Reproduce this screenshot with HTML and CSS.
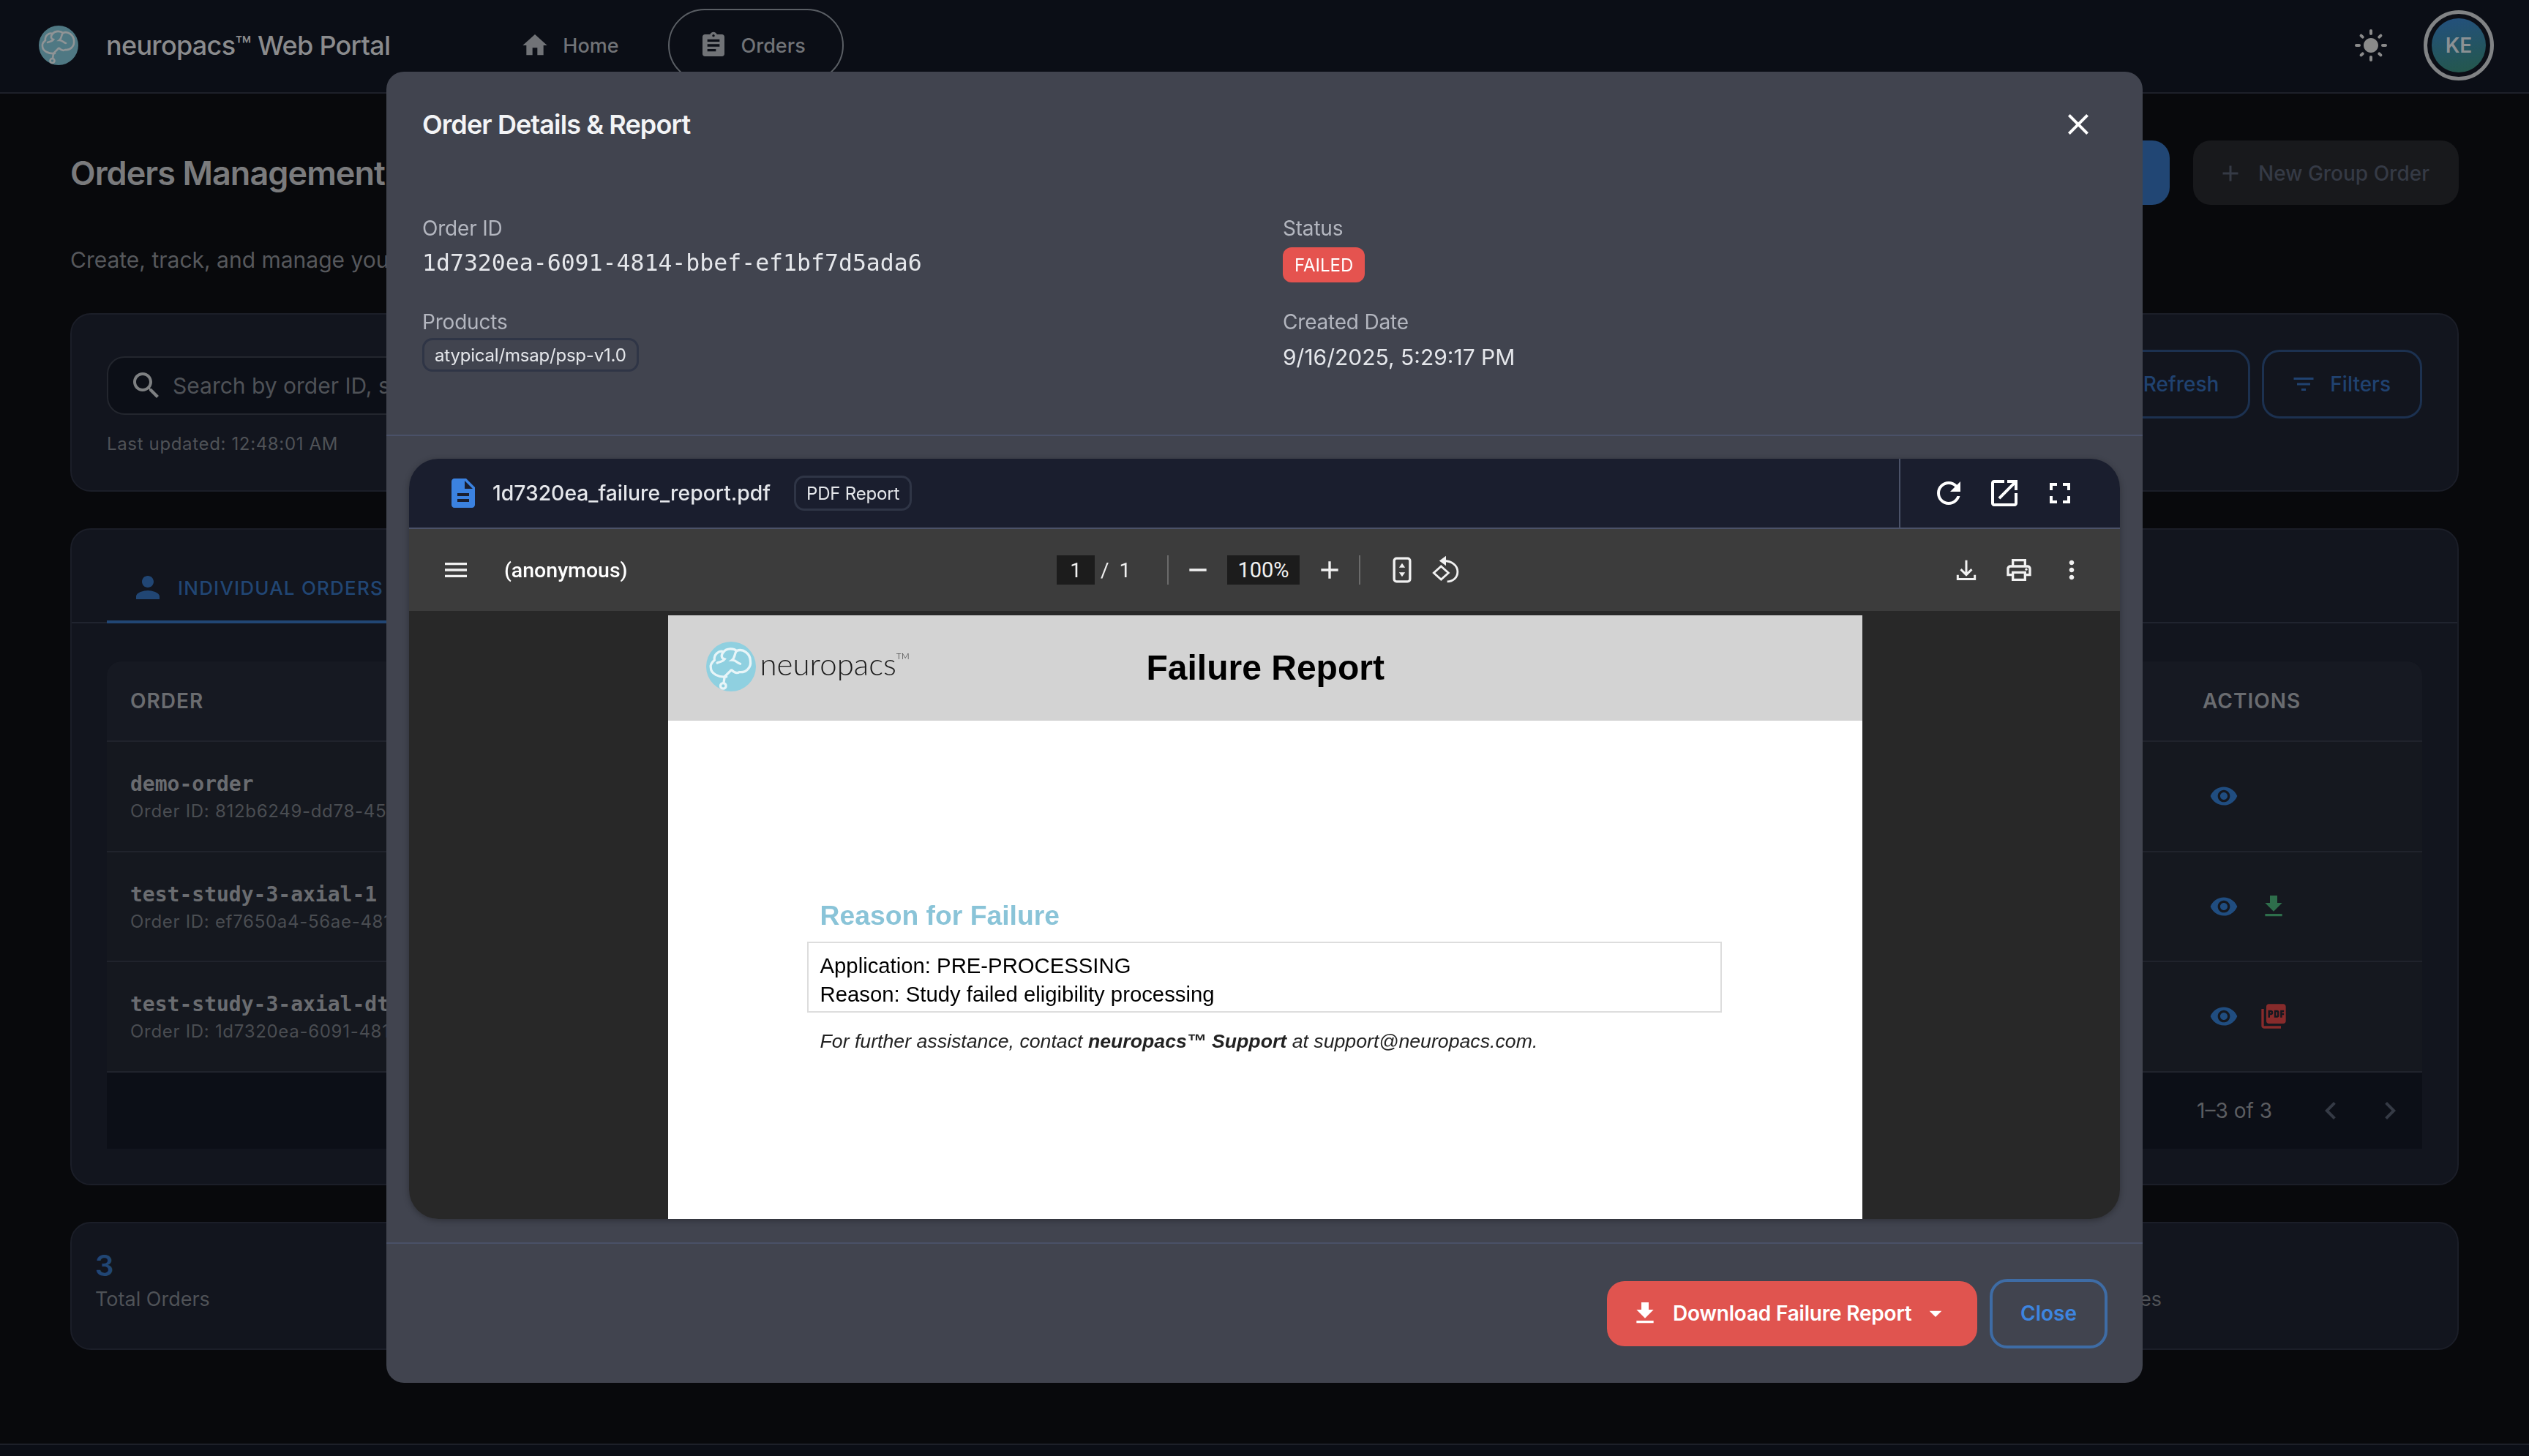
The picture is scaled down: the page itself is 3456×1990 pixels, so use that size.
FILE: index.html
```html
<!DOCTYPE html>
<html lang="en">
<head>
  <meta charset="UTF-8" />
  <title>neuropacs Web Portal - Orders</title>
  <link rel="stylesheet" href="styles.css">
</head>
<body>
  <svg class="icon-defs" xmlns="http://www.w3.org/2000/svg">
    <symbol id="i-home" viewBox="0 0 24 24"><path d="M10 20v-6h4v6h5v-8h3L12 3 2 12h3v8z"/></symbol>
    <symbol id="i-assign" viewBox="0 0 24 24"><path d="M19 3h-4.18C14.4 1.84 13.3 1 12 1c-1.3 0-2.4.84-2.82 2H5c-1.1 0-2 .9-2 2v14c0 1.1.9 2 2 2h14c1.1 0 2-.9 2-2V5c0-1.1-.9-2-2-2zm-7 0c.55 0 1 .45 1 1s-.45 1-1 1-1-.45-1-1 .45-1 1-1zm2 14H7v-2h7v2zm3-4H7v-2h10v2zm0-4H7V7h10v2z"/></symbol>
    <symbol id="i-sun" viewBox="0 0 24 24"><path d="M12 7c-2.76 0-5 2.24-5 5s2.24 5 5 5 5-2.24 5-5-2.24-5-5-5zM2 13h2c.55 0 1-.45 1-1s-.45-1-1-1H2c-.55 0-1 .45-1 1s.45 1 1 1zm18 0h2c.55 0 1-.45 1-1s-.45-1-1-1h-2c-.55 0-1 .45-1 1s.45 1 1 1zM11 2v2c0 .55.45 1 1 1s1-.45 1-1V2c0-.55-.45-1-1-1s-1 .45-1 1zm0 18v2c0 .55.45 1 1 1s1-.45 1-1v-2c0-.55-.45-1-1-1s-1 .45-1 1zM5.99 4.58c-.39-.39-1.03-.39-1.41 0-.39.39-.39 1.03 0 1.41l1.06 1.06c.39.39 1.03.39 1.41 0s.39-1.03 0-1.41L5.99 4.58zm12.37 12.37c-.39-.39-1.03-.39-1.41 0-.39.39-.39 1.03 0 1.41l1.06 1.06c.39.39 1.03.39 1.41 0 .39-.39.39-1.03 0-1.41l-1.06-1.06zm1.06-10.96c.39-.39.39-1.03 0-1.41-.39-.39-1.03-.39-1.41 0l-1.06 1.06c-.39.39-.39 1.03 0 1.41s1.03.39 1.41 0l1.06-1.06zM7.05 18.36c.39-.39.39-1.03 0-1.41-.39-.39-1.03-.39-1.41 0l-1.06 1.06c-.39.39-.39 1.03 0 1.41s1.03.39 1.41 0l1.06-1.06z"/></symbol>
    <symbol id="i-close" viewBox="0 0 24 24"><path d="M19 6.41 17.59 5 12 10.59 6.41 5 5 6.41 10.59 12 5 17.59 6.41 19 12 13.41 17.59 19 19 17.59 13.41 12z"/></symbol>
    <symbol id="i-search" viewBox="0 0 24 24"><path d="M15.5 14h-.79l-.28-.27C15.41 12.59 16 11.11 16 9.5 16 5.91 13.09 3 9.5 3S3 5.91 3 9.5 5.91 16 9.5 16c1.61 0 3.09-.59 4.23-1.57l.27.28v.79l5 4.99L20.49 19l-4.99-5zm-6 0C7.01 14 5 11.99 5 9.5S7.01 5 9.5 5 14 7.01 14 9.5 11.99 14 9.5 14z"/></symbol>
    <symbol id="i-add" viewBox="0 0 24 24"><path d="M19 13h-6v6h-2v-6H5v-2h6V5h2v6h6v2z"/></symbol>
    <symbol id="i-remove" viewBox="0 0 24 24"><path d="M19 13H5v-2h14v2z"/></symbol>
    <symbol id="i-filter" viewBox="0 0 24 24"><path d="M10 18h4v-2h-4v2zM3 6v2h18V6H3zm3 7h12v-2H6v2z"/></symbol>
    <symbol id="i-person" viewBox="0 0 24 24"><path d="M12 12c2.21 0 4-1.79 4-4s-1.79-4-4-4-4 1.79-4 4 1.79 4 4 4zm0 2c-2.67 0-8 1.34-8 4v2h16v-2c0-2.66-5.33-4-8-4z"/></symbol>
    <symbol id="i-eye" viewBox="0 0 24 24"><path d="M12 4.5C7 4.5 2.73 7.61 1 12c1.73 4.39 6 7.5 11 7.5s9.27-3.11 11-7.5c-1.73-4.39-6-7.5-11-7.5zM12 17c-2.76 0-5-2.24-5-5s2.24-5 5-5 5 2.24 5 5-2.24 5-5 5zm0-8c-1.66 0-3 1.34-3 3s1.34 3 3 3 3-1.34 3-3-1.34-3-3-3z"/></symbol>
    <symbol id="i-download" viewBox="0 0 24 24"><path d="M19 9h-4V3H9v6H5l7 7 7-7zM5 18v2h14v-2H5z"/></symbol>
    <symbol id="i-pdf" viewBox="0 0 24 24"><path d="M20 2H8c-1.1 0-2 .9-2 2v12c0 1.1.9 2 2 2h12c1.1 0 2-.9 2-2V4c0-1.1-.9-2-2-2zm-8.5 7.5c0 .83-.67 1.5-1.5 1.5H9v2H7.5V7H10c.83 0 1.5.67 1.5 1.5v1zm5 2c0 .83-.67 1.5-1.5 1.5h-2.5V7H15c.83 0 1.5.67 1.5 1.5v3zm4-3H19v1h1.5V11H19v2h-1.5V7h3v1.5zM9 9.5h1v-1H9v1zM4 6H2v14c0 1.1.9 2 2 2h14v-2H4V6zm10 5.5h1v-3h-1v3z"/></symbol>
    <symbol id="i-file" viewBox="0 0 24 24"><path d="M14 2H6c-1.1 0-1.99.9-1.99 2L4 20c0 1.1.89 2 1.99 2H18c1.1 0 2-.9 2-2V8l-6-6zm2 16H8v-2h8v2zm0-4H8v-2h8v2zm-3-5V3.5L18.5 9H13z"/></symbol>
    <symbol id="i-refresh" viewBox="0 0 24 24"><path d="M17.65 6.35C16.2 4.9 14.21 4 12 4c-4.42 0-7.99 3.58-7.99 8s3.57 8 7.99 8c3.73 0 6.84-2.55 7.73-6h-2.08c-.82 2.33-3.04 4-5.65 4-3.31 0-6-2.69-6-6s2.69-6 6-6c1.66 0 3.14.69 4.22 1.78L13 11h7V4l-2.35 2.35z"/></symbol>
    <symbol id="i-open" viewBox="0 0 24 24"><path d="M19 19H5V5h7V3H5c-1.11 0-2 .9-2 2v14c0 1.1.89 2 2 2h14c1.1 0 2-.9 2-2v-7h-2v7zM14 3v2h3.59l-9.83 9.83 1.41 1.41L19 6.41V10h2V3h-7z"/></symbol>
    <symbol id="i-full" viewBox="0 0 24 24"><path d="M7 14H5v5h5v-2H7v-3zm-2-4h2V7h3V5H5v5zm12 7h-3v2h5v-5h-2v3zM14 5v2h3v3h2V5h-5z"/></symbol>
    <symbol id="i-menu" viewBox="0 0 24 24"><path d="M3 18h18v-2H3v2zm0-5h18v-2H3v2zm0-7v2h18V6H3z"/></symbol>
    <symbol id="i-drop" viewBox="0 0 24 24"><path d="M7 10l5 5 5-5z"/></symbol>
    <symbol id="i-left" viewBox="0 0 24 24"><path d="M15.41 7.41 14 6l-6 6 6 6 1.41-1.41L10.83 12z"/></symbol>
    <symbol id="i-right" viewBox="0 0 24 24"><path d="M10 6 8.59 7.41 13.17 12l-4.58 4.59L10 18l6-6z"/></symbol>
    <symbol id="i-print" viewBox="0 0 24 24"><path d="M19 8h-1V3H6v5H5c-1.66 0-3 1.34-3 3v6h4v4h12v-4h4v-6c0-1.66-1.34-3-3-3zM8 5h8v3H8V5zm8 14H8v-4h8v4zm2-4v-2H6v2H4v-4c0-.55.45-1 1-1h14c.55 0 1 .45 1 1v4h-2z"/><circle cx="18" cy="11.500" r="1"/></symbol>
    <symbol id="i-more" viewBox="0 0 24 24"><path d="M12 8c1.1 0 2-.9 2-2s-.9-2-2-2-2 .9-2 2 .9 2 2 2zm0 2c-1.1 0-2 .9-2 2s.9 2 2 2 2-.9 2-2-.9-2-2-2zm0 6c-1.1 0-2 .9-2 2s.9 2 2 2 2-.9 2-2-.9-2-2-2z"/></symbol>
    <symbol id="i-save" viewBox="0 0 24 24"><path d="M12 4v12M7.500 11.500 12 16l4.500-4.500M5 16v3.500h14V16" fill="none" stroke="currentColor" stroke-width="1.800"/></symbol>
    <symbol id="i-fit" viewBox="0 0 24 24"><rect x="5.500" y="2.500" width="13" height="19" rx="2" fill="none" stroke="currentColor" stroke-width="2"/><path d="M12 6.500l2.500 3.500h-5zM12 17.500l-2.500-3.500h5z"/></symbol>
    <symbol id="i-rotate" viewBox="0 0 24 24"><g fill="none" stroke="currentColor" stroke-width="1.700"><path d="M10 4.500c6.500 0 11.500 3.500 11.500 9 0 4.500-3.500 8-8.500 8"/><path d="M8 9l6 5.400-6 5.400-6-5.400z"/></g><path d="M12 .5v8L6.500 4.500z"/></symbol>
    <symbol id="i-brain" viewBox="0 0 54 54"><g fill="none" stroke="currentColor" stroke-width="2.600" stroke-linecap="round"><path d="M22 38C14 39 5 35 5 28c-1-4 3-7 4-8-1-6 5-11 10-9 3-4 11-4 14-1 7-3 15 3 15 11 1 6-4 13-12 12-3 2-6 0-8-2"/><path d="M19 11c-3 3-3 7 1 8-2 3-6 3-8 4"/><path d="M33 10c-3 4-1 7-5 10 5 0 5 3 9 4"/><path d="M27 31l-7 7-1 7"/><circle cx="18.500" cy="48" r="3"/></g></symbol>
  </svg>

  <header class="topbar">
    <div class="brand">
      <span class="brand-logo"><svg><use href="#i-brain"/></svg></span>
      <span class="brand-name">neuropacs™ Web Portal</span>
    </div>
    <nav class="nav">
      <a class="nav-item"><svg class="ic"><use href="#i-home"/></svg>Home</a>
      <a class="nav-item nav-active"><svg class="ic"><use href="#i-assign"/></svg>Orders</a>
    </nav>
    <div class="topbar-right">
      <svg class="ic-sun"><use href="#i-sun"/></svg>
      <span class="avatar-ring"><span class="avatar">KE</span></span>
    </div>
  </header>

  <main class="page">
    <div class="page-head">
      <h1>Orders Management</h1>
      <div class="page-actions">
        <button class="btn-primary">New Order</button>
        <button class="btn-disabled"><svg class="ic"><use href="#i-add"/></svg>New Group Order</button>
      </div>
    </div>
    <p class="page-sub">Create, track, and manage your orders</p>

    <section class="card search-card">
      <div class="search-left">
        <div class="search-box"><svg class="ic-search"><use href="#i-search"/></svg>Search by order ID, status</div>
        <div class="updated">Last updated: 12:48:01 AM</div>
      </div>
      <div class="search-btns">
        <button class="btn-outline"><svg class="ic"><use href="#i-refresh"/></svg>Refresh</button>
        <button class="btn-outline"><svg class="ic"><use href="#i-filter"/></svg>Filters</button>
      </div>
    </section>

    <section class="card orders-card">
      <div class="tabs">
        <div class="tab"><svg class="ic-person"><use href="#i-person"/></svg>INDIVIDUAL ORDERS</div>
      </div>
      <div class="table-wrap">
        <div class="table">
          <div class="row row-head"><span>ORDER</span><span>ACTIONS</span></div>
          <div class="row">
            <div><div class="order-name">demo-order</div><div class="order-id">Order ID: 812b6249-dd78-45</div></div>
            <div class="actions"><svg class="ic-eye"><use href="#i-eye"/></svg></div>
          </div>
          <div class="row">
            <div><div class="order-name">test-study-3-axial-1</div><div class="order-id">Order ID: ef7650a4-56ae-481</div></div>
            <div class="actions"><svg class="ic-eye"><use href="#i-eye"/></svg><svg class="ic-get"><use href="#i-download"/></svg></div>
          </div>
          <div class="row">
            <div><div class="order-name">test-study-3-axial-dt</div><div class="order-id">Order ID: 1d7320ea-6091-4814-bbef-ef1bf7d5ada6</div></div>
            <div class="actions"><svg class="ic-eye"><use href="#i-eye"/></svg><svg class="ic-pdf"><use href="#i-pdf"/></svg></div>
          </div>
        </div>
        <div class="pager">
          <span>1–3 of 3</span>
          <svg class="ic-page ic-prev"><use href="#i-left"/></svg>
          <svg class="ic-page"><use href="#i-right"/></svg>
        </div>
      </div>
    </section>

    <section class="card stats-card">
      <div class="stat"><div class="stat-num">3</div><div class="stat-label">Total Orders</div></div>
      <div class="stat stat-last"><div class="stat-label">Failed Studies</div></div>
    </section>
  </main>
  <footer class="footer"></footer>

  <div class="modal">
    <div class="modal-head">
      <h2>Order Details &amp; Report</h2>
      <svg class="modal-x"><use href="#i-close"/></svg>
    </div>
    <div class="details">
      <div class="detail">
        <div class="label">Order ID</div>
        <div class="mono-value">1d7320ea-6091-4814-bbef-ef1bf7d5ada6</div>
      </div>
      <div class="detail">
        <div class="label">Status</div>
        <span class="chip-failed">FAILED</span>
      </div>
      <div class="detail detail-low">
        <div class="label">Products</div>
        <span class="chip-outline">atypical/msap/psp-v1.0</span>
      </div>
      <div class="detail detail-low">
        <div class="label">Created Date</div>
        <div class="date-value">9/16/2025, 5:29:17 PM</div>
      </div>
    </div>

    <div class="viewer">
      <div class="viewer-head">
        <div class="viewer-file">
          <svg class="ic-file"><use href="#i-file"/></svg>
          <span class="file-name">1d7320ea_failure_report.pdf</span>
          <span class="chip-outline chip-dark">PDF Report</span>
        </div>
        <div class="viewer-tools">
          <svg><use href="#i-refresh"/></svg>
          <svg><use href="#i-open"/></svg>
          <svg><use href="#i-full"/></svg>
        </div>
      </div>

      <div class="pdf-bar">
        <svg class="pdf-menu"><use href="#i-menu"/></svg>
        <span class="pdf-title">(anonymous)</span>
        <div class="pdf-center">
          <span class="pdf-input pdf-page">1</span>
          <span class="pdf-count">/&nbsp; 1</span>
          <span class="pdf-sep"></span>
          <svg class="pdf-ic"><use href="#i-remove"/></svg>
          <span class="pdf-input pdf-zoom">100%</span>
          <svg class="pdf-ic"><use href="#i-add"/></svg>
          <span class="pdf-sep"></span>
          <svg class="pdf-ic pdf-fit"><use href="#i-fit"/></svg>
          <svg class="pdf-ic"><use href="#i-rotate"/></svg>
        </div>
        <div class="pdf-right">
          <svg class="pdf-ic"><use href="#i-save"/></svg>
          <svg class="pdf-ic"><use href="#i-print"/></svg>
          <svg class="pdf-ic"><use href="#i-more"/></svg>
        </div>
      </div>

      <div class="pdf-canvas">
        <div class="sheet">
          <div class="sheet-head">
            <div class="sheet-logo">
              <span class="sheet-mark"><svg><use href="#i-brain"/></svg></span>
              <span class="sheet-word">neuropacs<sup>TM</sup></span>
            </div>
            <div class="sheet-title">Failure Report</div>
          </div>
          <div class="sheet-body">
            <h3>Reason for Failure</h3>
            <div class="reason-box">
              <div>Application: PRE-PROCESSING</div>
              <div>Reason: Study failed eligibility processing</div>
            </div>
            <p class="assist">For further assistance, contact <b>neuropacs™ Support</b> at support@neuropacs.com.</p>
          </div>
        </div>
      </div>
    </div>

    <div class="modal-foot">
      <button class="btn-danger">
        <svg class="ic-dl"><use href="#i-download"/></svg>Download Failure Report<svg class="ic-drop"><use href="#i-drop"/></svg>
      </button>
      <button class="btn-close">Close</button>
    </div>
  </div>
</body>
</html>
```

FILE: styles.css
```css
* {
  box-sizing: border-box;
}
html, body {
  margin: 0;
  height: 100%;
}
body {
  display: flex;
  flex-direction: column;
  height: 1990px;
  overflow: hidden;
  background: #08090c;
  color: #7d7e80;
  font-family: Inter, "Noto Sans", sans-serif;
}
svg {
  fill: currentColor;
}
button {
  font-family: inherit;
}
.icon-defs {
  display: none;
}

/* top bar */
.topbar {
  display: flex;
  align-items: center;
  flex: none;
  height: 128px;
  padding: 0 48px 2px 53px;
  background: #0b0e16;
  border-bottom: 2px solid #1d2029;
}
.brand {
  display: flex;
  align-items: center;
  gap: 38px;
}
.brand-logo {
  display: block;
  width: 54px;
  height: 54px;
  border-radius: 50%;
  background: #4f7883;
  color: #8f9496;
}
.brand-logo svg {
  display: block;
  width: 54px;
  height: 54px;
}
.brand-name {
  font-size: 36px;
  font-weight: 500;
  letter-spacing: -0.7px;
  color: #8a8b8d;
}
.nav {
  display: flex;
  align-items: center;
  gap: 67px;
  margin-left: 178px;
}
.nav-item {
  display: flex;
  align-items: center;
  gap: 18px;
  font-size: 27px;
  font-weight: 500;
  color: #717377;
}
.nav-item .ic {
  width: 40px;
  height: 40px;
}
.nav-active {
  height: 100px;
  padding: 0 50px 0 40px;
  border: 2px solid #5a5e64;
  border-radius: 50px;
}
.topbar-right {
  display: flex;
  align-items: center;
  gap: 48px;
  margin-left: auto;
}
.ic-sun {
  width: 48px;
  height: 48px;
  color: #8a8a8a;
}
.avatar-ring {
  display: flex;
  align-items: center;
  justify-content: center;
  width: 96px;
  height: 96px;
  border: 5px solid #818385;
  border-radius: 50%;
}
.avatar {
  display: flex;
  align-items: center;
  justify-content: center;
  width: 74px;
  height: 74px;
  border-radius: 50%;
  background: linear-gradient(170deg, #23507f, #24584a);
  font-size: 28px;
  font-weight: 600;
  color: #8b9194;
}

/* page behind the dialog */
.page {
  flex: none;
  height: 1845px;
  padding: 64px 96px 0;
}
.page-head {
  display: flex;
  align-items: center;
  justify-content: space-between;
  height: 88px;
}
.page-head h1 {
  margin: 0;
  font-size: 45px;
  font-weight: 600;
  letter-spacing: -0.95px;
  color: #7a7b7d;
}
.page-actions {
  display: flex;
  gap: 32px;
}
.btn-primary {
  width: 400px;
  height: 88px;
  border: 0;
  border-radius: 24px;
  background: #214674;
}
.btn-disabled {
  display: flex;
  align-items: center;
  gap: 20px;
  height: 88px;
  padding: 2px 40px 0 33px;
  border: 0;
  border-radius: 24px;
  background: #18191c;
  font-size: 28px;
  font-weight: 500;
  color: #353a45;
}
.btn-disabled .ic {
  width: 36px;
  height: 36px;
}
.page-sub {
  margin: 55px 0 53px;
  font-size: 30px;
  line-height: 40px;
  color: #56585c;
}
.card {
  background: #12151e;
  border: 2px solid #1b1e28;
  border-radius: 28px;
}
.search-card {
  display: flex;
  justify-content: space-between;
  height: 244px;
  padding: 48px 48px 0;
}
.search-box {
  display: flex;
  align-items: center;
  gap: 12px;
  width: 1000px;
  height: 80px;
  margin-top: 9px;
  padding: 0 18px 0 28px;
  border: 2px solid #23262e;
  border-radius: 24px;
  background: #0c0f17;
  font-size: 30px;
  color: #4f5257;
}
.ic-search {
  width: 48px;
  height: 48px;
  color: #7e8082;
}
.updated {
  margin-top: 24px;
  font-size: 24px;
  letter-spacing: 0.65px;
  line-height: 32px;
  color: #4f5257;
}
.search-btns {
  display: flex;
  gap: 16px;
}
.btn-outline {
  display: flex;
  align-items: center;
  gap: 18px;
  height: 94px;
  padding: 0 40px 0 36px;
  border: 3px solid #1c3150;
  border-radius: 24px;
  background: transparent;
  font-size: 28px;
  font-weight: 500;
  color: #204270;
}
.btn-outline .ic {
  width: 36px;
  height: 36px;
}
.orders-card {
  height: 898px;
  margin-top: 50px;
}
.tabs {
  height: 128px;
  padding: 0 48px;
  border-bottom: 2px solid #20242f;
}
.tab {
  display: flex;
  align-items: center;
  gap: 17px;
  width: 1200px;
  height: 128px;
  padding: 34px 0 0 32px;
  border-bottom: 4px solid #214674;
  font-size: 26px;
  font-weight: 500;
  letter-spacing: 1.2px;
  color: #214674;
}
.ic-person {
  width: 48px;
  height: 48px;
}
.table-wrap {
  padding: 52px 48px 0;
}
.table {
  background: #15181f;
  border-radius: 20px 20px 0 0;
}
.row {
  display: grid;
  grid-template-columns: 1fr 300px;
  align-items: center;
  height: 150.500px;
  padding: 0 0 0 32px;
  border-top: 2px solid #20232c;
}
.row-head {
  height: 108px;
  background: #161922;
  border-top: 0;
  border-radius: 20px 20px 0 0;
  font-size: 28px;
  font-weight: 600;
  letter-spacing: 1px;
  color: #6a6c70;
}
.order-name {
  margin-top: 3px;
  font-family: "DejaVu Sans Mono", monospace;
  font-size: 28px;
  font-weight: 700;
  line-height: 36px;
  color: #6a6c70;
}
.order-id {
  font-size: 24px;
  letter-spacing: 0.7px;
  line-height: 32px;
  margin-top: 3px;
  color: #4a4d52;
}
.actions {
  display: flex;
  align-items: center;
  gap: 28px;
  margin-left: 9px;
}
.ic-eye {
  width: 40px;
  height: 40px;
  color: #204d80;
}
.ic-get {
  width: 40px;
  height: 40px;
  color: #2e6e4b;
}
.ic-pdf {
  width: 40px;
  height: 40px;
  color: #872b2b;
}
.pager {
  display: flex;
  align-items: center;
  justify-content: flex-end;
  height: 106px;
  padding-right: 20px;
  border-top: 2px solid #20232c;
  background: #0c0f17;
  font-size: 28px;
  color: #5c5e62;
}
.ic-page {
  width: 48px;
  height: 48px;
  margin-left: 33px;
  color: #353a45;
}
.ic-prev {
  margin-left: 56px;
}
.stats-card {
  display: flex;
  justify-content: space-between;
  height: 175px;
  margin-top: 50px;
  padding: 36px 404px 0 32px;
}
.stat-num {
  font-size: 40px;
  font-weight: 600;
  line-height: 44px;
  color: #214674;
}
.stat-label {
  font-size: 27px;
  line-height: 36px;
  margin-top: 6px;
  color: #4f5257;
}
.stat-last {
  padding-top: 44px;
}
.footer {
  flex: 1;
  background: #0b0e16;
  border-top: 2px solid #1d2029;
}

/* dialog */
.modal {
  position: fixed;
  top: 98px;
  left: 528px;
  display: flex;
  flex-direction: column;
  width: 2400px;
  height: 1792px;
  background: #41444f;
  border-radius: 24px;
  color: #e5e7eb;
}
.modal-head {
  display: flex;
  align-items: center;
  justify-content: space-between;
  height: 44px;
  margin: 50px 48px 0 49px;
}
.modal-head h2 {
  margin: 0;
  font-size: 36px;
  font-weight: 600;
  letter-spacing: -0.9px;
  color: #f3f4f6;
}
.modal-x {
  width: 48px;
  height: 48px;
  margin-right: 16px;
  color: #fff;
}
.details {
  display: grid;
  grid-template-columns: 1176px 1fr;
  grid-template-rows: 128px 86px;
  margin: 102px 0 0;
  padding: 0 49px 86px;
  border-bottom: 2px solid #4a5168;
  height: 302px;
}
.label {
  font-size: 28px;
  letter-spacing: -0.2px;
  line-height: 36px;
  color: #b3b6bf;
}
.mono-value {
  margin-top: 9px;
  font-family: "DejaVu Sans Mono", monospace;
  font-size: 31.500px;
  line-height: 40px;
  color: #e5e7eb;
}
.chip-failed {
  display: inline-flex;
  align-items: center;
  height: 48px;
  margin-top: 8px;
  padding: 0 16px;
  border-radius: 12px;
  background: #e5534f;
  font-size: 24px;
  color: #fff;
}
.chip-outline {
  display: inline-flex;
  align-items: center;
  height: 46px;
  margin-top: 4px;
  padding: 0 14px;
  border: 3px solid #2f3546;
  border-radius: 14px;
  font-size: 24px;
  letter-spacing: -0.2px;
  color: #e5e7eb;
}
.date-value {
  margin-top: 10px;
  font-size: 30px;
  line-height: 40px;
  color: #e5e7eb;
}
.viewer {
  display: flex;
  flex-direction: column;
  height: 1039px;
  margin: 31px 31px 0;
  border-radius: 40px;
  overflow: hidden;
  box-shadow: 0 2px 8px rgba(0,0,0,0.3);
}
.viewer-head {
  display: flex;
  justify-content: space-between;
  flex: none;
  height: 96px;
  background: #1a1e2e;
  border-bottom: 2px solid #4b5268;
}
.viewer-file {
  display: flex;
  align-items: center;
  padding-left: 50px;
}
.ic-file {
  width: 48px;
  height: 48px;
  color: #3b82e0;
}
.file-name {
  margin: 0 32px 0 16px;
  font-size: 28.300px;
  font-weight: 500;
  color: #e5e7eb;
}
.chip-dark {
  height: 48px;
  margin-top: 0;
}
.viewer-tools {
  display: flex;
  align-items: center;
  gap: 28px;
  width: 302px;
  padding-left: 42px;
  border-left: 2px solid #4b5268;
  color: #fff;
}
.viewer-tools svg {
  width: 48px;
  height: 48px;
}
.pdf-bar {
  display: flex;
  align-items: center;
  flex: none;
  height: 112px;
  background: #3c3c3c;
  color: #f1f1f1;
  font-family: Roboto, sans-serif;
}
.pdf-menu {
  width: 40px;
  height: 40px;
  margin-left: 44px;
}
.pdf-title {
  width: 755px;
  margin-left: 46px;
  font-size: 28.500px;
  font-weight: 500;
  color: #fff;
}
.pdf-center {
  display: flex;
  align-items: center;
}
.pdf-input {
  display: flex;
  align-items: center;
  justify-content: center;
  height: 40px;
  background: #1c1c1c;
  font-size: 28px;
}
.pdf-page {
  width: 52px;
}
.pdf-zoom {
  width: 99px;
  font-size: 29px;
}
.pdf-count {
  width: 99px;
  padding-left: 8px;
  font-size: 28px;
}
.pdf-sep {
  width: 2px;
  height: 40px;
  background: #6b6b6b;
}
.pdf-ic {
  width: 40px;
  height: 40px;
}
.pdf-center .pdf-ic:nth-of-type(1) {
  margin: 0 20px;
}
.pdf-center .pdf-ic:nth-of-type(2) {
  margin: 0 20px 0 21px;
}
.pdf-fit {
  margin: 0 20px 0 37px;
}
.pdf-right {
  display: flex;
  align-items: center;
  gap: 32px;
  margin-left: auto;
  padding-right: 46px;
}
.pdf-canvas {
  flex: 1;
  display: flex;
  justify-content: center;
  padding-top: 6px;
  background: #282828;
  overflow: hidden;
}

/* report page inside the viewer */
.sheet {
  width: 1632px;
  margin-left: 1px;
  background: #fff;
  color: #000;
  font-family: "Liberation Sans", Arial, sans-serif;
}
.sheet-head {
  display: flex;
  align-items: center;
  height: 144px;
  padding-left: 52px;
  background: #d3d3d3;
}
.sheet-logo {
  display: flex;
  align-items: center;
  gap: 6px;
  width: 602px;
  margin-top: -4px;
}
.sheet-mark {
  display: block;
  width: 68px;
  height: 68px;
  border-radius: 50%;
  background: #8fd0e0;
  color: #e8f5f8;
}
.sheet-mark svg {
  display: block;
  width: 68px;
  height: 68px;
}
.sheet-word {
  margin-top: -8px;
  font-family: Lato, sans-serif;
  font-size: 42px;
  font-weight: 300;
  color: #1a1a1a;
}
.sheet-word sup {
  font-size: 12px;
  vertical-align: 22px;
  line-height: 0;
}
.sheet-title {
  margin-top: -2px;
  font-size: 48px;
  font-weight: 700;
}
.sheet-body {
  padding: 244px 0 0 190px;
}
.sheet-body h3 {
  margin: 0;
  padding-left: 18px;
  font-size: 37.300px;
  line-height: 44px;
  font-weight: 700;
  color: #8ac4d8;
}
.reason-box {
  width: 1250px;
  height: 97px;
  margin-top: 14px;
  padding: 11px 16px;
  border: 2px solid #ddd;
  font-size: 29.300px;
  line-height: 39px;
}
.assist {
  margin: 21px 0 0;
  padding-left: 18px;
  font-size: 26.700px;
  line-height: 36px;
  font-style: italic;
  color: #222;
}
.modal-foot {
  display: flex;
  align-items: center;
  justify-content: flex-end;
  gap: 17px;
  flex: 1;
  margin-top: 32px;
  padding: 0 48px 0 0;
  border-top: 2px solid #4a5168;
}
.btn-danger {
  display: flex;
  align-items: center;
  width: 506px;
  height: 89px;
  padding: 0 0 0 32px;
  border: 0;
  border-radius: 24px;
  background: #e0544f;
  font-size: 28px;
  font-weight: 600;
  letter-spacing: -0.2px;
  color: #fff;
}
.ic-dl {
  width: 40px;
  height: 40px;
  margin-right: 18px;
}
.ic-drop {
  width: 40px;
  height: 40px;
  margin-left: 12px;
}
.btn-close {
  width: 161px;
  height: 95px;
  border: 4px solid #3e6ca5;
  border-radius: 24px;
  background: transparent;
  font-size: 28px;
  font-weight: 600;
  color: #3d85e0;
}
```
